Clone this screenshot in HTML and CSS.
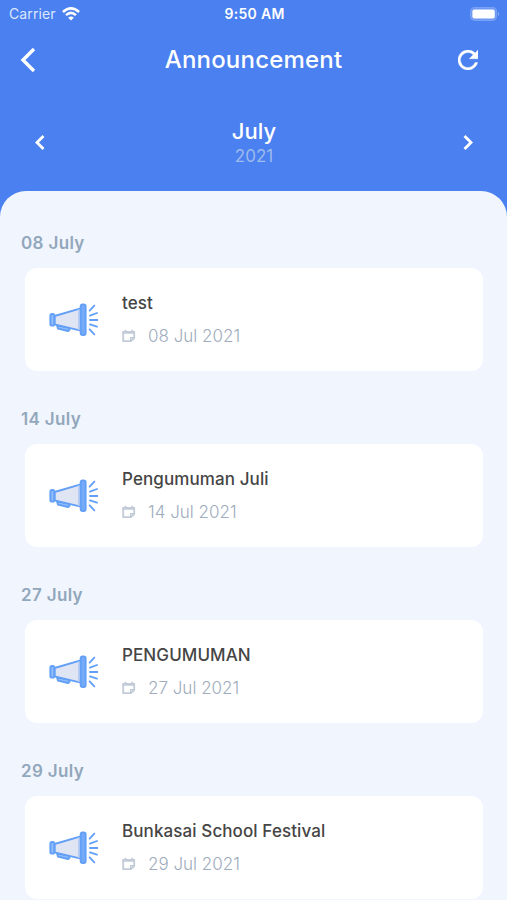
FILE: index.html
```html
<!DOCTYPE html>
<html lang="en">
<head>
<meta charset="utf-8">
<title>Announcement</title>
<link rel="stylesheet" href="styles.css">
</head>
<body>
<svg width="0" height="0" class="defs">
  <symbol id="horn" viewBox="27 39 150 102">
    <g stroke="#629ff7" stroke-width="5.5" stroke-linecap="round" stroke-linejoin="round">
      <path d="M51 106L54 116L84 123Q91 122 88 113Z" fill="#8dbbfa"/>
      <path d="M44 78L122 55V122L44 103Z" fill="#e0e5f3"/>
      <path d="M116 59V119" stroke="#b9cdf4" stroke-width="4"/>
      <rect x="31" y="72" width="12" height="35" rx="5" fill="#8dbbfa"/>
      <rect x="122" y="43" width="15" height="92" rx="6" fill="#76aaf6"/>
      <path d="M149 62L163 47M150 77L171 69M150 90H172M150 103L171 110M149 118L163 133" fill="none"/>
    </g>
  </symbol>
  <symbol id="note" viewBox="0 0 14 14">
    <path d="M1.2 3V12.2H9L12.2 9V3Z" fill="none" stroke="#c3cbd8" stroke-width="1.8" stroke-linejoin="round"/>
    <path d="M.6 2H12.9V4.8H.6ZM2.6 .7H4.4V2H2.6ZM9.4 .7H11.2V2H9.4Z" fill="#c3cbd8"/>
    <path d="M8.6 12V8.8H12" fill="none" stroke="#c3cbd8" stroke-width="1.4"/>
  </symbol>
</svg>
<header class="top">
  <div class="status">
    <div class="carrier"><span>Carrier</span>
      <svg width="18" height="14" viewBox="0 0 18 14" fill="none" stroke="#fff" stroke-width="2.5"><path d="M.9 5Q9 -2.3 17.1 5M4 8.1Q9 3.7 14 8.1"/><path d="M9 13.5L6.2 10.7Q9 8.5 11.8 10.7Z" fill="#fff" stroke="none"/></svg>
    </div>
    <div class="clock">9:50 AM</div>
    <svg class="battery" width="30" height="14" viewBox="0 0 30 14"><rect x=".6" y=".6" width="26" height="12.8" rx="4" fill="#6d98f3" stroke="#7fa5f5"/><rect x="2.4" y="2.6" width="22.4" height="8.8" rx="2" fill="#fff"/><path d="M28 4.8Q30 7 28 9.2Z" fill="#9bb9f7"/></svg>
  </div>
  <div class="bar">
    <svg width="16" height="26" viewBox="0 0 16 26" fill="none" stroke="#fff" stroke-width="3.4"><path d="M14 2L3 13L14 24"/></svg>
    <h1>Announcement</h1>
    <svg class="reload" width="20" height="20" viewBox="4 4 16 16"><path fill="#fff" stroke="#fff" stroke-width=".3" d="M17.65 6.35A8 8 0 1 0 19.73 14H17.65A6 6 0 1 1 16.22 7.78L13 11H20V4Z"/></svg>
  </div>
  <div class="month">
    <svg width="10" height="16" viewBox="0 0 10 16" fill="none" stroke="#fff" stroke-width="2.8"><path d="M8.5 2L2 8.5L8.5 15"/></svg>
    <div class="when"><div class="name">July</div><div class="year">2021</div></div>
    <svg width="10" height="16" viewBox="0 0 10 16" fill="none" stroke="#fff" stroke-width="2.8"><path d="M1.5 2L8 8.5L1.5 15"/></svg>
  </div>
</header>
<main class="panel">
  <section><h2>08 July</h2><article class="card"><svg class="horn"><use href="#horn"/></svg><div><h3>test</h3><p><svg class="note"><use href="#note"/></svg><span>08 Jul 2021</span></p></div></article></section>
  <section><h2>14 July</h2><article class="card"><svg class="horn"><use href="#horn"/></svg><div><h3>Pengumuman Juli</h3><p><svg class="note"><use href="#note"/></svg><span>14 Jul 2021</span></p></div></article></section>
  <section><h2>27 July</h2><article class="card"><svg class="horn"><use href="#horn"/></svg><div><h3>PENGUMUMAN</h3><p><svg class="note"><use href="#note"/></svg><span>27 Jul 2021</span></p></div></article></section>
  <section><h2>29 July</h2><article class="card"><svg class="horn"><use href="#horn"/></svg><div><h3>Bunkasai School Festival</h3><p><svg class="note"><use href="#note"/></svg><span>29 Jul 2021</span></p></div></article></section>
</main>
</body>
</html>
```
FILE: styles.css
```css
* { box-sizing: border-box; margin: 0; padding: 0; }
body { height: 900px; overflow: hidden; background: #4a80ef; font-family: Inter, sans-serif; color: #fff; }
svg { display: block; flex: none; }
.defs { position: absolute; }
.top { height: 191px; }
.status { display: grid; grid-template-columns: 1fr auto 1fr; align-items: center; height: 27px; padding: 0 7px 0 9px; }
.carrier { display: flex; align-items: center; gap: 6px; font-size: 14px; line-height: 27px; letter-spacing: .1px; color: #dce7fd; }
.clock { font-size: 14px; font-weight: 600; letter-spacing: .3px; }
.battery { justify-self: end; }
.bar { display: grid; grid-template-columns: 1fr auto 1fr; align-items: center; height: 66px; padding: 0 20px; }
.reload { justify-self: end; margin-right: 9px; }
h1 { font-size: 24px; line-height: 30px; font-weight: 500; letter-spacing: .2px; }
.month { display: flex; justify-content: space-between; align-items: center; height: 98px; padding: 0 34px 0 35px; }
.when { text-align: center; }
.name { font-size: 22px; line-height: 27px; font-weight: 500; letter-spacing: .1px; }
.year { font-size: 17px; line-height: 22px; color: #9dbbec; }
.panel { height: 709px; padding-top: 37px; border-radius: 26px 26px 0 0; background: #f1f5fd; }
section { height: 176px; padding: 0 24px 0 25px; }
h2 { margin-left: -4px; height: 40px; font-size: 17px; line-height: 30px; font-weight: 600; letter-spacing: .35px; color: #91a7bb; }
.card { display: flex; gap: 23px; height: 103px; padding: 21px 24px; border-radius: 12px; background: #fff; }
.horn { width: 50px; height: 34px; margin-top: 14px; }
h3 { font-size: 17px; line-height: 28px; font-weight: 500; letter-spacing: .1px; color: #454545; }
p { display: flex; align-items: center; gap: 12px; margin-top: 5px; font-size: 17px; line-height: 28px; font-weight: 300; color: #9eacbd; }
.note { width: 14px; height: 14px; }
```
